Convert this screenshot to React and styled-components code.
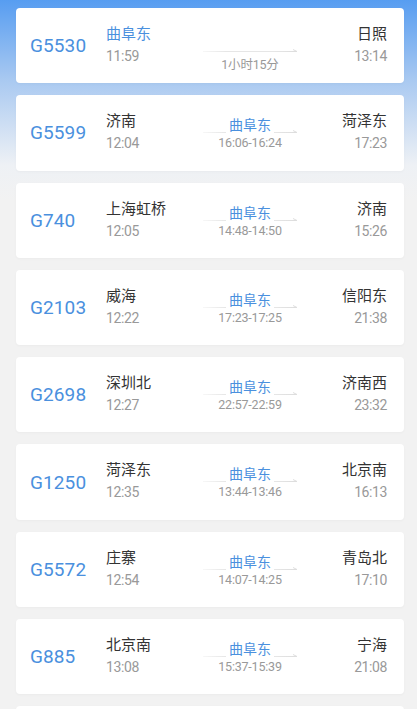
import React from 'react';
import styled, {createGlobalStyle} from 'styled-components';

const GlobalStyle = createGlobalStyle`
html, body {
    margin: 0;
    padding: 0;
    background: #f2f2f2;
    font-family: Roboto, "Noto Sans CJK SC", sans-serif;
}
`

const Page = styled.div`
padding: 8px 13px 0 16px;
background: linear-gradient(180deg, #579df1 0px, #a9c9f1 80px, #eef1f5 165px, #f2f2f2 200px);
overflow: hidden;
height: 709px;
box-sizing: border-box;
`

const Card = styled.div`
display: grid;
grid-template-columns: 76px 96px 96px 1fr;
height: 75.3px;
margin-bottom: 12px;
padding: 0 17px 0 14px;
background: #fff;
border-radius: 4px;
box-shadow: 0 1px 3px rgba(0, 0, 0, 0.03);
`

const TrainNo = styled.div`
align-self: center;
font-size: 19px;
color: #4a90de;
letter-spacing: 0.1px;
`

const Stop = styled.div`
display: flex;
flex-direction: column;
align-items: ${p => p.$right ? 'flex-end' : 'flex-start'};
padding-top: 16px;
`

const StationName = styled.div`
font-size: 15px;
line-height: 20px;
color: ${p => p.$hl ? '#4a90de' : '#333'};
`

const Time = styled.div`
margin-top: 3px;
font-size: 14px;
line-height: 18px;
color: #999;
letter-spacing: -0.4px;
`

const Middle = styled.div`
display: flex;
flex-direction: column;
align-items: center;
padding-top: ${p => p.$duration ? '38px' : '21px'};
`

const Stack = styled.div`
display: grid;
width: 96px;
> * {
    grid-area: 1 / 1;
}
`

const Line = styled.svg`
align-self: end;
width: 96px;
height: 6px;
margin-bottom: ${p => p.$low ? '0' : '1px'};
`

const ViaName = styled.div`
justify-self: center;
padding: 0 3px;
background: #fff;
font-size: 14px;
line-height: 18px;
color: #4a90de;
`

const SmallText = styled.div`
margin-top: ${p => p.$gap || 1}px;
font-size: 12.5px;
line-height: 16px;
color: #999;
letter-spacing: -0.2px;
`

const ArrowLine = ({low}) => (
    <Line $low={low} viewBox="0 0 96 6">
        <defs>
            <linearGradient id="fade" gradientUnits="userSpaceOnUse" x1="0" y1="0" x2="96" y2="0">
                <stop offset="0" stopColor="#e6e6e6" stopOpacity="0.3"/>
                <stop offset="0.25" stopColor="#e6e6e6"/>
                <stop offset="0.75" stopColor="#e6e6e6"/>
                <stop offset="1" stopColor="#dcdcdc"/>
            </linearGradient>
        </defs>
        <path d="M1 5.5 H95" stroke="url(#fade)" strokeWidth="1" fill="none"/>
        <path d="M95 5.5 L91 3.5" stroke="#dedede" strokeWidth="1" fill="none"/>
    </Line>
)

const trains = [
    {no: 'G5530', from: '曲阜东', dep: '11:59', to: '日照', arr: '13:14', duration: '1小时15分', hl: true},
    {no: 'G5599', from: '济南', dep: '12:04', to: '菏泽东', arr: '17:23', via: '16:06-16:24'},
    {no: 'G740', from: '上海虹桥', dep: '12:05', to: '济南', arr: '15:26', via: '14:48-14:50'},
    {no: 'G2103', from: '威海', dep: '12:22', to: '信阳东', arr: '21:38', via: '17:23-17:25'},
    {no: 'G2698', from: '深圳北', dep: '12:27', to: '济南西', arr: '23:32', via: '22:57-22:59'},
    {no: 'G1250', from: '菏泽东', dep: '12:35', to: '北京南', arr: '16:13', via: '13:44-13:46'},
    {no: 'G5572', from: '庄寨', dep: '12:54', to: '青岛北', arr: '17:10', via: '14:07-14:25'},
    {no: 'G885', from: '北京南', dep: '13:08', to: '宁海', arr: '21:08', via: '15:37-15:39'},
]

const App = () => (
    <>
        <GlobalStyle/>
        <Page>
            {trains.map(t => (
                <Card key={t.no}>
                    <TrainNo>{t.no}</TrainNo>
                    <Stop>
                        <StationName $hl={t.hl}>{t.from}</StationName>
                        <Time>{t.dep}</Time>
                    </Stop>
                    {t.duration ? (
                        <Middle $duration>
                            <ArrowLine low/>
                            <SmallText $gap={5}>{t.duration}</SmallText>
                        </Middle>
                    ) : (
                        <Middle>
                            <Stack>
                                <ArrowLine/>
                                <ViaName>曲阜东</ViaName>
                            </Stack>
                            <SmallText>{t.via}</SmallText>
                        </Middle>
                    )}
                    <Stop $right>
                        <StationName>{t.to}</StationName>
                        <Time>{t.arr}</Time>
                    </Stop>
                </Card>
            ))}
            {/* next card, only its top edge is on screen */}
            <Card/>
        </Page>
    </>
);

export default App;
